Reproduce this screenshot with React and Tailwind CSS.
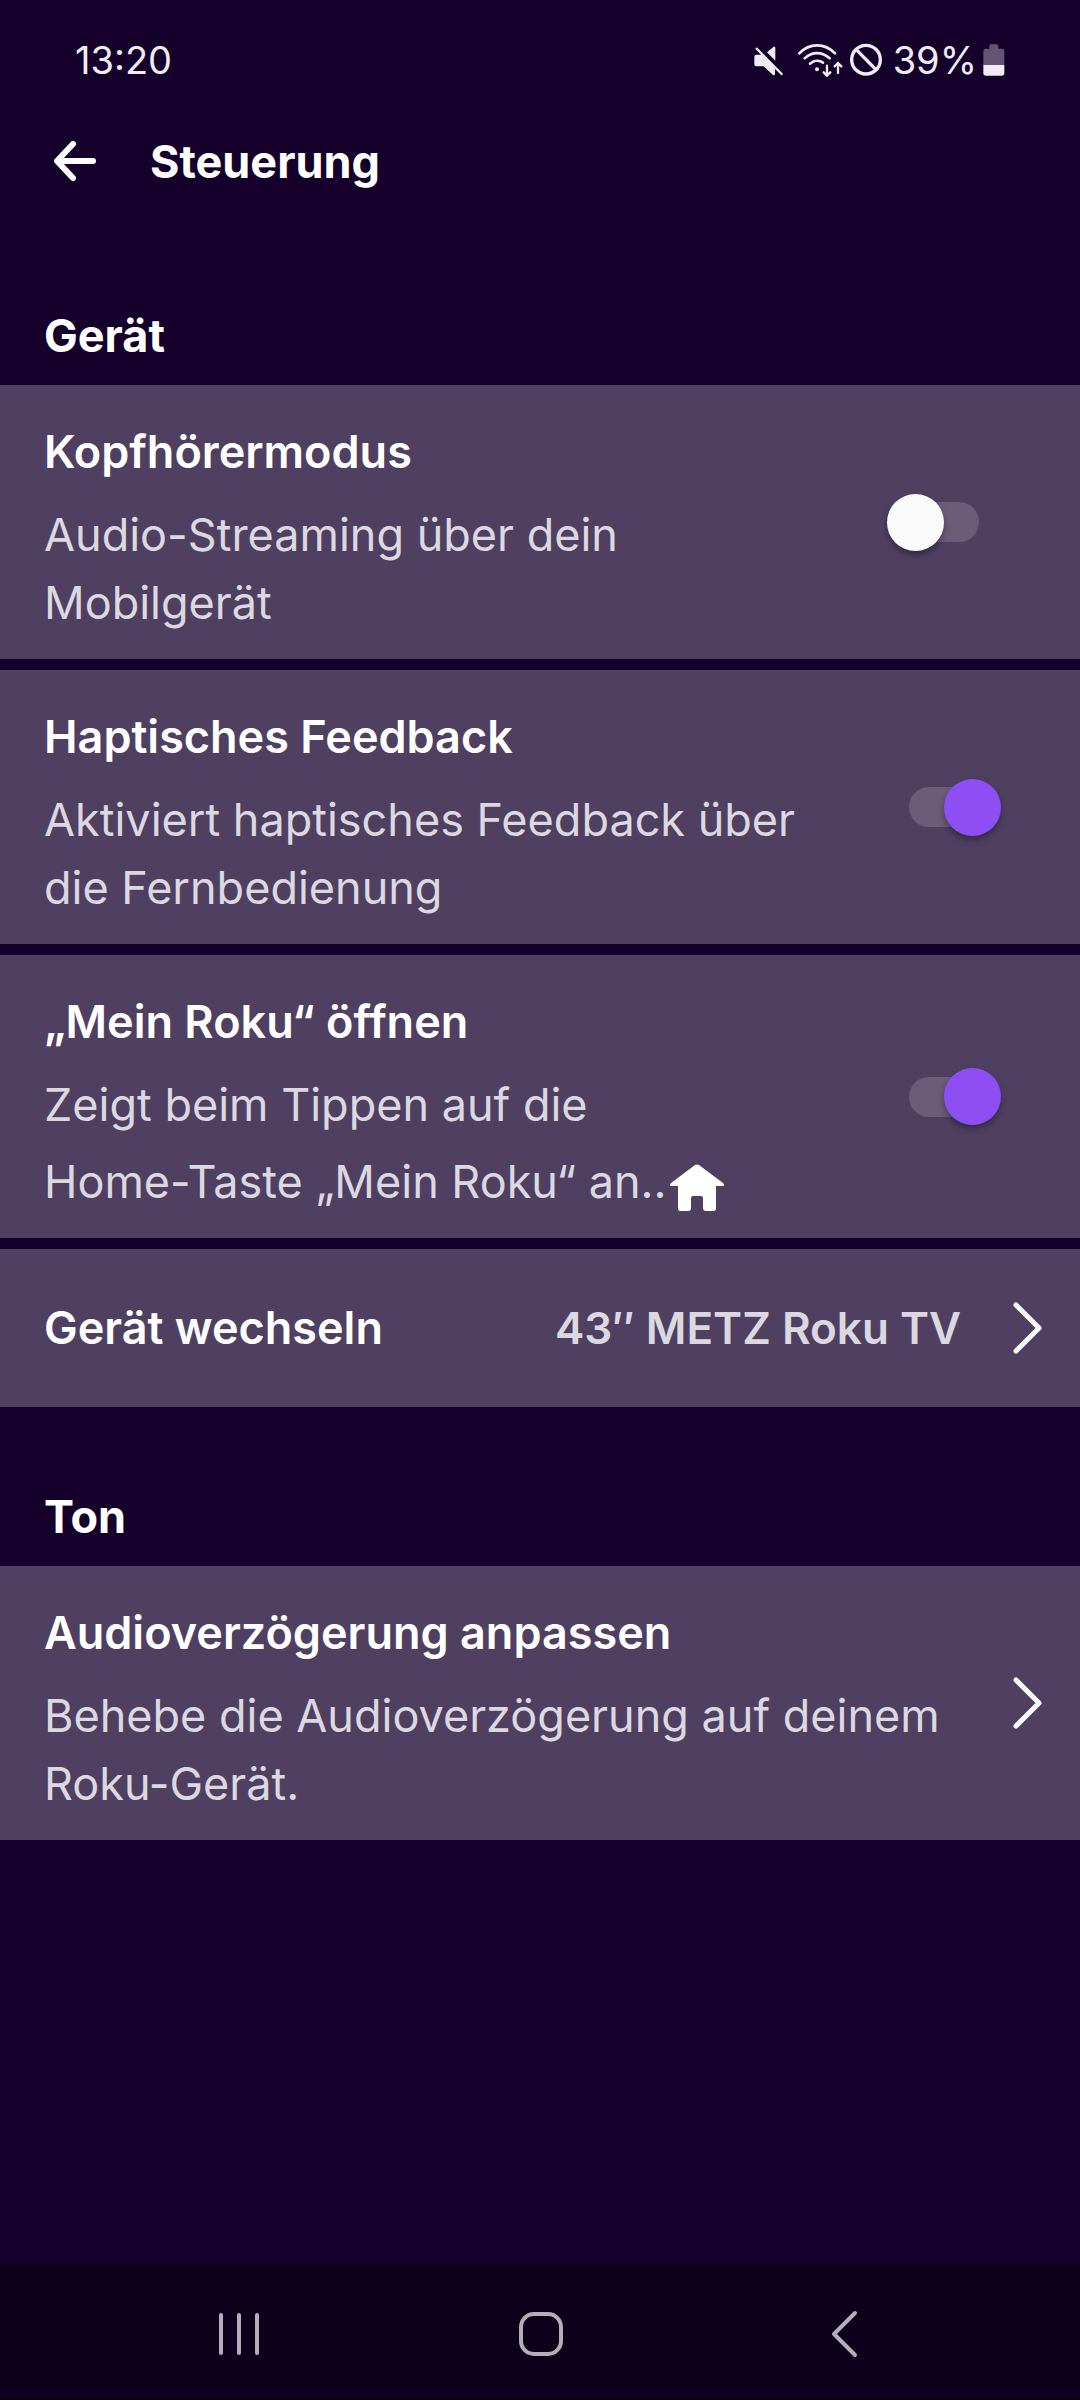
import { useState } from 'react'

function StatusBar() {
  return (
    <div className="pt-9 pl-[75px] pr-[75px] flex items-center justify-between text-[38px] leading-[48px] text-[#efecf4]">
      <span>13:20</span>
      <div className="flex items-center">
        {/* muted */}
        <svg className="w-[30px] h-10 mr-3.5" viewBox="105 60 90 120" fill="currentColor">
          <path d="M112 104h18l38 38v20c0 4-4 5-7 2l-27-25h-22a6 6 0 0 1-6-6v-23a6 6 0 0 1 6-6z" />
          <path d="M144 97l19-16c3-2 6-1 6 3v38z" />
          <path d="M113 86l75 76" fill="none" stroke="currentColor" strokeWidth="7" strokeLinecap="round" />
        </svg>
        {/* wifi with traffic arrows */}
        <svg className="w-[45px] h-10 mr-1.5" viewBox="236 60 135 120" fill="none" stroke="currentColor" strokeWidth="8" strokeLinecap="round" strokeLinejoin="round">
          <path d="M240 100c30-32 76-32 107 0" />
          <path d="M256 115c21-21 53-21 75 0" />
          <path d="M272 131c11-10 27-12 39-3" />
          <circle cx="293" cy="148" r="6" fill="currentColor" stroke="none" />
          <path d="M323 137v30m-10-10l10 10 10-10" strokeWidth="7" />
          <path d="M356 159v-30m-10 10l10-10 10 10" strokeWidth="7" />
        </svg>
        {/* blocked */}
        <svg className="w-[34px] h-10 mr-2.5" viewBox="389 60 102 120" fill="none" stroke="currentColor" strokeWidth="10">
          <circle cx="440" cy="119" r="43" />
          <path d="M410 88l60 61" />
        </svg>
        <span>39%</span>
        <svg className="w-[22px] h-10 ml-1.5" viewBox="791 60 66 120" fill="currentColor">
          <path d="M810 86v-8q0-5 5-5h17q5 0 5 5v8h10q8 0 8 8v41h-63v-41q0-8 8-8z" fill="#635673" />
          <path d="M792 135h63v24q0 8-8 8h-47q-8 0-8-8z" />
        </svg>
      </div>
    </div>
  )
}

function Header() {
  return (
    <header className="pt-11 pl-[54px] flex items-center">
      <button aria-label="Zurück">
        <svg className="w-[42px] h-[42px]" viewBox="0 0 42 42" fill="none" stroke="currentColor" strokeWidth="6" strokeLinecap="round" strokeLinejoin="round">
          <path d="M39 20H4M19 3L3 20l16 17" />
        </svg>
      </button>
      <h1 className="ml-[54px] text-[45px] leading-[68px] font-bold">Steuerung</h1>
    </header>
  )
}

function Chevron() {
  return (
    <svg className="w-[30px] h-[52px] shrink-0" viewBox="0 0 30 52" fill="none" stroke="#ffffff" strokeWidth="5" strokeLinecap="round" strokeLinejoin="round">
      <path d="M3 3l23 23L3 49" />
    </svg>
  )
}

function HomeIcon() {
  return (
    <svg className="inline-block w-[54px] h-[77px] ml-1 align-bottom" viewBox="0 0 54 77" fill="#ffffff">
      <path d="M25 26q2-1 4 0l24 18q1 1 1 2 0 1-1 1h-7v22q0 3-2 3h-8q-3 0-3-3V59q0-2-2-2h-8q-2 0-2 2v10q0 3-3 3h-8q-2 0-2-3V47H1q-1 0-1-1 0-1 1-2z" />
    </svg>
  )
}

function Text({ title, children }) {
  return (
    <span className="flex-1 min-w-0 flex flex-col gap-[15px]">
      <span className="text-[45px] leading-[68px] font-semibold">{title}</span>
      <span className="text-[45px] leading-[68px] text-[#dcd8e0]">{children}</span>
    </span>
  )
}

function ToggleRow({ title, initial, children }) {
  const [on, setOn] = useState(initial)

  return (
    <label className="bg-[#4f4062] pl-11 pr-[79px] flex items-center gap-[60px]">
      <span className="flex-1 pt-[33px] pb-[22px] flex">
        <Text title={title}>{children}</Text>
      </span>
      <input type="checkbox" role="switch" checked={on} onChange={e => setOn(e.target.checked)}
        className="appearance-none shrink-0 grid items-center w-[114px] h-[57px] before:content-[''] before:[grid-area:1/1] before:justify-self-center before:w-[70px] before:h-10 before:rounded-full before:bg-[#6b5d78] after:content-[''] after:[grid-area:1/1] after:justify-self-start after:w-[57px] after:h-[57px] after:rounded-full after:bg-[#fafafa] after:shadow-[0_4px_6px_rgba(0,0,0,0.35)] checked:after:justify-self-end checked:after:bg-[#8d4ff3]" />
    </label>
  )
}

function SectionTitle({ children }) {
  return <h2 className="pl-11 pb-[15px] text-[45px] leading-[68px] font-bold">{children}</h2>
}

function NavBar() {
  return (
    <nav className="h-[136px] pt-1 px-[88px] grid grid-cols-3 items-center justify-items-center bg-[#0d001b] border-b border-black text-[#b4aebc]">
      <button aria-label="Letzte Apps">
        <svg className="w-12 h-12" viewBox="0 0 48 48" fill="none" stroke="currentColor" strokeWidth="4" strokeLinecap="round">
          <path d="M6 5v38M24 5v38M42 5v38" />
        </svg>
      </button>
      <button aria-label="Startseite">
        <svg className="w-12 h-12" viewBox="0 0 48 48" fill="none" stroke="currentColor" strokeWidth="4">
          <rect x="5" y="4" width="40" height="40" rx="13" />
        </svg>
      </button>
      <button aria-label="Zurück">
        <svg className="w-12 h-12" viewBox="0 0 48 48" fill="none" stroke="currentColor" strokeWidth="4" strokeLinecap="round" strokeLinejoin="round">
          <path d="M38 3L17 24l21 21" />
        </svg>
      </button>
    </nav>
  )
}

export default function App() {
  return (
    <div className="min-h-screen flex flex-col bg-[#14002b] text-white font-['Inter',sans-serif]">
      <StatusBar />
      <Header />

      <main className="flex-1 pt-[106px]">
        <section>
          <SectionTitle>Gerät</SectionTitle>
          <div className="flex flex-col gap-[11px]">
            <ToggleRow title="Kopfhörermodus" initial={false}>
              Audio-Streaming über dein Mobilgerät
            </ToggleRow>
            <ToggleRow title="Haptisches Feedback" initial={true}>
              Aktiviert haptisches Feedback über die Fernbedienung
            </ToggleRow>
            <ToggleRow title="„Mein Roku“ öffnen" initial={true}>
              Zeigt beim Tippen auf die<br />
              Home-Taste „Mein Roku“ an..<HomeIcon />
            </ToggleRow>
            <button className="bg-[#4f4062] py-[45px] pl-11 pr-[37px] flex items-center text-left text-[45px] leading-[68px] font-semibold">
              <span className="flex-1">Gerät wechseln</span>
              <span className="mr-[52px] text-[44px] text-[#dcd8e0]">43″ METZ Roku TV</span>
              <Chevron />
            </button>
          </div>
        </section>

        <section className="pt-[76px]">
          <SectionTitle>Ton</SectionTitle>
          <button className="w-full bg-[#4f4062] pl-11 pr-[37px] flex items-center gap-10 text-left">
            <span className="flex-1 pt-[33px] pb-[22px] flex">
              <Text title="Audioverzögerung anpassen">
                Behebe die Audioverzögerung auf deinem Roku-Gerät.
              </Text>
            </span>
            <Chevron />
          </button>
        </section>
      </main>

      <NavBar />
    </div>
  )
}
